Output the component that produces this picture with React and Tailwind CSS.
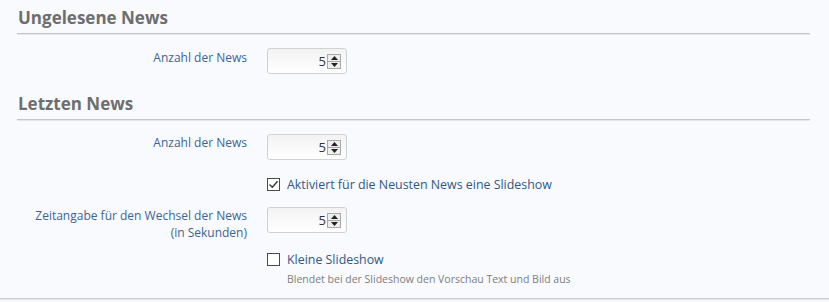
import React from "react";

const font = { fontFamily: '"Open Sans", "DejaVu Sans", sans-serif' };

function Spin({ value = 5 }) {
  return (
    <div className="relative flex h-[26px] w-[80px] items-center justify-end rounded-[3px] border border-[#cfd2d6] bg-gradient-to-b from-[#f3f3f3] to-white pr-[5px]">
      <span className="mr-[1px] text-[13px] leading-none text-[#333]">{value}</span>
      <div className="flex h-[15px] w-[14px] flex-col border border-[#a9a9a9] bg-[#eeeeee]">
        <div className="flex flex-1 items-center justify-center border-b border-[#a9a9a9]">
          <svg width="7" height="4" viewBox="0 0 7 4"><path d="M0 4 L3.5 0 L7 4 Z" fill="#222" /></svg>
        </div>
        <div className="flex flex-1 items-center justify-center">
          <svg width="7" height="4" viewBox="0 0 7 4"><path d="M0 0 L3.5 4 L7 0 Z" fill="#222" /></svg>
        </div>
      </div>
    </div>
  );
}

function Check({ checked }) {
  return (
    <div className="flex h-[13px] w-[13px] items-center justify-center border border-[#4a4a4a] bg-white">
      {checked && (
        <svg width="11" height="11" viewBox="0 0 11 11">
          <path d="M1.5 5.5 L4.3 8.3 L9.6 2.2" stroke="#333" strokeWidth="1.3" fill="none" />
        </svg>
      )}
    </div>
  );
}

function Heading({ children, className = "" }) {
  return (
    <div className={`ml-[17px] mr-[19px] ${className}`}>
      <div className="pl-[1px] text-[17px] font-bold leading-[22px] text-[#6e6e6e]">{children}</div>
      <div className="mt-[4px] h-[2px] border-t border-[#c6c6c6] bg-[#e6e6e6]" />
    </div>
  );
}

function Row({ label, children, className = "" }) {
  return (
    <div className={`flex ${className}`}>
      <div className="w-[247px] shrink-0 text-right text-[12px] leading-[17px] text-[#3c6594]">{label}</div>
      <div className="ml-[20px]">{children}</div>
    </div>
  );
}

export default function App() {
  return (
    <div className="h-[302px] w-[829px] overflow-hidden bg-[#f9fafd]" style={font}>
      <Heading className="pt-[7px]">Ungelesene News</Heading>

      <Row className="mt-[13px]" label={<div className="pt-[1px]">Anzahl der News</div>}>
        <Spin />
      </Row>

      <Heading className="mt-[19px]">Letzten News</Heading>

      <Row className="mt-[13px]" label={<div>Anzahl der News</div>}>
        <Spin />
      </Row>

      <div className="ml-[267px] mt-[16px] flex items-center gap-[7px]">
        <Check checked />
        <span className="text-[12.4px] leading-[17px] text-[#2f5888]">Aktiviert für die Neusten News eine Slideshow</span>
      </div>

      <Row
        className="mt-[14px]"
        label={
          <div>
            Zeitangabe für den Wechsel der News
            <br />
            (in Sekunden)
          </div>
        }
      >
        <Spin />
      </Row>

      <div className="ml-[267px] mt-[10px] flex items-start gap-[7px]">
        <div className="pt-[2px]">
          <Check />
        </div>
        <div>
          <div className="text-[12.4px] leading-[17px] text-[#2f5888]">Kleine Slideshow</div>
          <div className="mt-[4px] text-[10.5px] leading-[14px] text-[#7d7d7d]">Blendet bei der Slideshow den Vorschau Text und Bild aus</div>
        </div>
      </div>

      <div className="mt-[12px] h-[2px] border-t border-[#cfcfcf] bg-[#e4e4e4]" />
    </div>
  );
}
